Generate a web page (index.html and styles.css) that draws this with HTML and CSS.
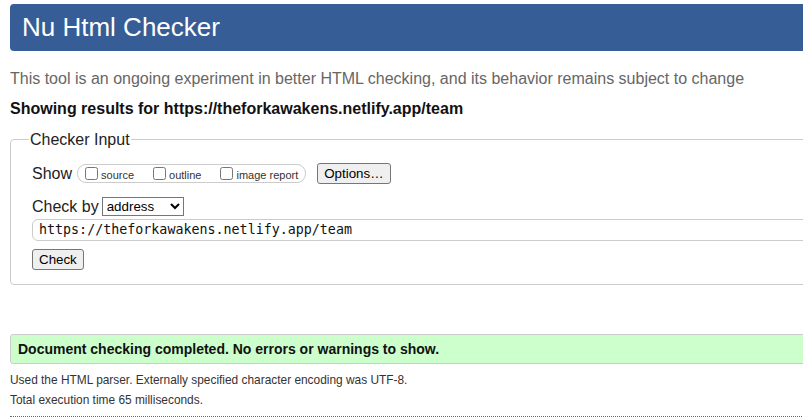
FILE: index.html
```html
<!DOCTYPE html>
<html>
<head>
<meta charset="utf-8">
<title>Nu Html Checker</title>
<link rel="stylesheet" href="styles.css">
</head>
<body>
<div class="page">
  <h1 class="title">Nu Html Checker</h1>
  <p class="intro">This tool is an ongoing experiment in better HTML checking, and its behavior remains subject to change</p>
  <p class="showing">Showing results for https://theforkawakens.netlify.app/team</p>
  <fieldset class="input-box">
    <legend class="legend">Checker Input</legend>
    <div class="row row-show">
      <span class="row-label">Show</span>
      <div class="checks">
        <label class="check"><input type="checkbox" class="cb"><span>source</span></label>
        <label class="check"><input type="checkbox" class="cb"><span>outline</span></label>
        <label class="check"><input type="checkbox" class="cb"><span>image report</span></label>
      </div>
      <button class="btn btn-options">Options…</button>
    </div>
    <div class="row row-by">
      <span class="row-label">Check by</span>
      <select class="sel"><option>address</option></select>
    </div>
    <div class="url">https://theforkawakens.netlify.app/team</div>
    <button class="btn btn-check">Check</button>
  </fieldset>
  <p class="success">Document checking completed. No errors or warnings to show.</p>
  <p class="details">Used the HTML parser. Externally specified character encoding was UTF-8.</p>
  <p class="details">Total execution time 65 milliseconds.</p>
  <div class="rule"></div>
</div>
</body>
</html>
```

FILE: styles.css
```css
html {
  overflow: hidden;
}
body {
  margin: 0;
  background: #fff;
  font-family: "Liberation Sans", Arial, sans-serif;
  color: #111;
}
.page {
  width: 1100px;
  padding: 4px 0 0 10px;
}
.title {
  margin: 0;
  height: 47px;
  line-height: 47px;
  padding-left: 12px;
  background: #365d95;
  color: #fff;
  font-size: 26px;
  font-weight: normal;
  border-radius: 4px;
}
.intro {
  margin: 18px 0 0;
  font-size: 16px;
  line-height: 19px;
  color: #666;
}
.showing {
  margin: 11px 0 0;
  font-size: 16px;
  line-height: 19px;
  font-weight: bold;
  color: #111;
}
.input-box {
  margin: 12px 0 0;
  padding: 14px 21px 14px;
  border: 1px solid #ccc;
  border-radius: 4px;
}
.legend {
  padding: 0 1px;
  margin-left: -3px;
  font-size: 16px;
  line-height: 19px;
  color: #222;
}
.row {
  display: flex;
  align-items: center;
}
.row-label {
  font-size: 16px;
  color: #222;
}
.row-show {
  height: 21px;
}
.checks {
  display: flex;
  align-items: center;
  height: 17px;
  margin-left: 5px;
  padding: 0 7px 0 7px;
  border: 1px solid #ccc;
  border-radius: 9px;
}
.check {
  display: flex;
  align-items: center;
  font-size: 11px;
  color: #333;
  margin-right: 19px;
}
.check:last-child {
  margin-right: 0;
}
.cb {
  margin: 0 3px 0 0;
  width: 13px;
  height: 13px;
}
.check span {
  padding-top: 2px;
}
.btn {
  font-family: "Liberation Sans", Arial, sans-serif;
  font-size: 13.33px;
  color: #000;
  background: #efefef;
  border: 1px solid #767676;
  border-radius: 3px;
  padding: 1px 6px;
  height: 21px;
}
.btn-options {
  margin-left: 11px;
}
.row-by {
  margin-top: 13px;
  height: 19px;
}
.sel {
  margin-left: 3px;
  width: 82px;
  height: 19px;
  font-family: "Liberation Sans", Arial, sans-serif;
  font-size: 13.33px;
  color: #000;
  border: 1px solid #767676;
  border-radius: 0;
  background: #fff;
}
.url {
  margin-top: 3px;
  height: 20px;
  line-height: 20px;
  padding-left: 6px;
  border: 1px solid #ccc;
  border-radius: 6px;
  font-family: "DejaVu Sans Mono", monospace;
  font-size: 13.33px;
  color: #111;
}
.btn-check {
  display: block;
  margin-top: 8px;
  height: 21px;
}
.success {
  margin: 49px 0 0;
  height: 28px;
  line-height: 28px;
  padding-left: 7px;
  background: #ccffcc;
  border: 1px solid #ccc;
  border-radius: 3px;
  font-size: 14px;
  font-weight: bold;
  color: #111;
}
.details {
  margin: 8px 0 0;
  font-size: 11.9px;
  line-height: 12px;
  color: #333;
}
.success + .details {
  margin-top: 10px;
}
.rule {
  margin-top: 10px;
  border-top: 1px dotted #666;
}
```
